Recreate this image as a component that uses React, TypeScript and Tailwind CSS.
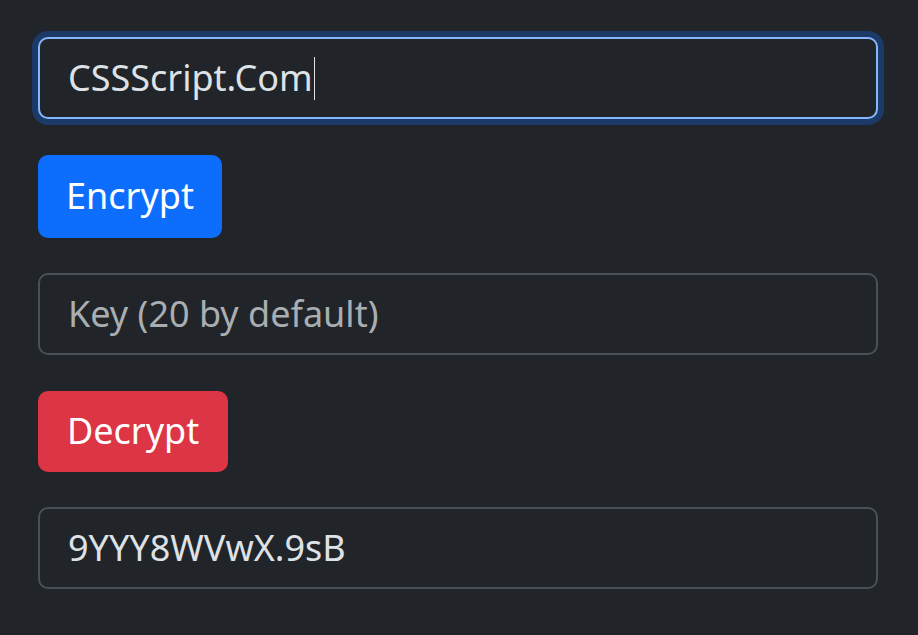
import React from "react";

const FONT = "font-['Noto_Sans','Open_Sans',sans-serif]";

function Field({ value, placeholder, focused, caret }: { value?: string; placeholder?: string; focused?: boolean; caret?: boolean }) {
	return (
		<div
			className={`flex h-[82px] w-full items-center rounded-[10px] border-2 bg-[#212529] px-[28px] text-[36px] leading-none ${
				focused ? "border-[#86b7fe] shadow-[0_0_0_6px_rgba(13,110,253,0.3)]" : "border-[#495057]"
			}`}
		>
			{value ? (
				<span className="flex items-center text-[#dee2e6]">
					{value}
					{caret ? <span className="ml-[1px] inline-block h-[43px] w-[1px] bg-[#dee2e6]" /> : null}
				</span>
			) : (
				<span className="text-[#a9aeb3]">{placeholder}</span>
			)}
		</div>
	);
}

export default function App() {
	return (
		<div className={`min-h-[635px] w-full bg-[#212529] ${FONT}`}>
			<div className="box-content flex w-[840px] flex-col items-start gap-[35.5px] pl-[38px] pt-[37px]">
				<Field value="CSSScript.Com" focused caret />
				<button type="button" className="h-[83px] rounded-[10px] bg-[#0d6efd] px-[28px] text-[36px] leading-none text-white">
					Encrypt
				</button>
				<Field placeholder="Key (20 by default)" />
				<button type="button" className="h-[81px] rounded-[10px] bg-[#dc3545] px-[29px] text-[36px] leading-none text-white">
					Decrypt
				</button>
				<Field value="9YYY8WVwX.9sB" />
			</div>
		</div>
	);
}
